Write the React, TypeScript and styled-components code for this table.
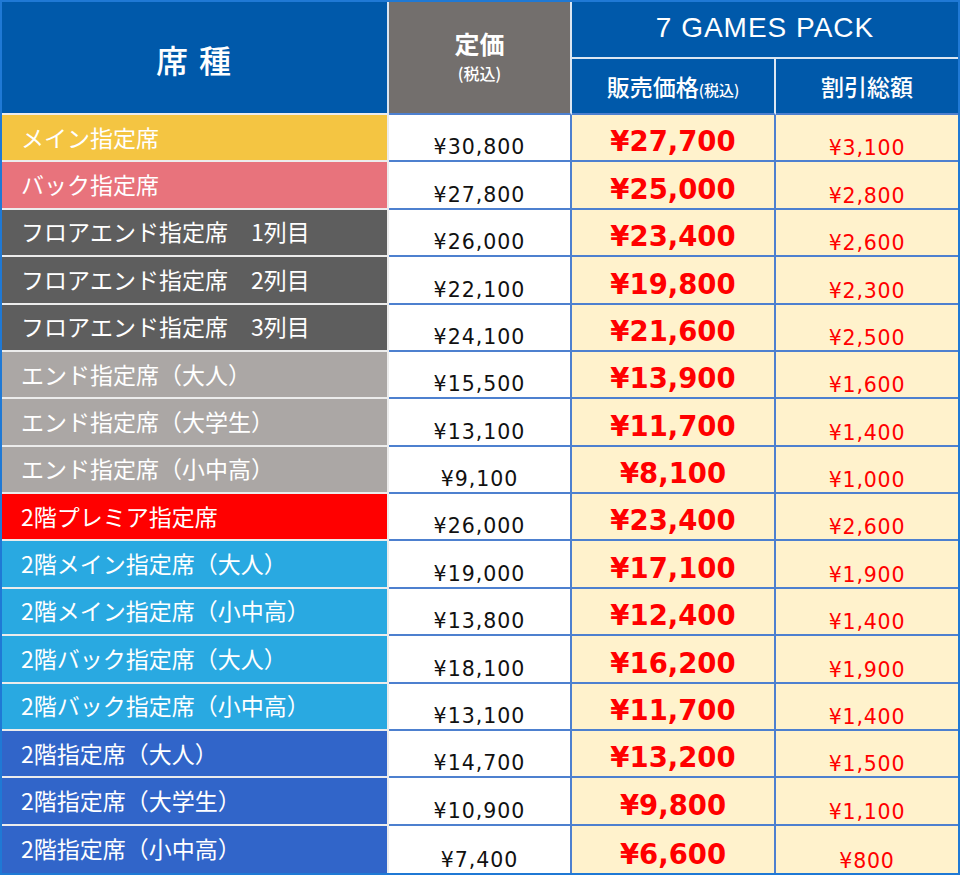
import React from "react";
import styled, { createGlobalStyle } from "styled-components";

const GlobalStyle = createGlobalStyle`
  html, body { margin: 0; padding: 0; background: #ffffff; }
  body { font-family: "Noto Sans CJK JP", "Noto Sans", sans-serif; }
`;

const LINE = "#4d80cf";
const HEAD_LINE = "#dbe6f2";
const LABEL_LINE = "#ececec";

const Table = styled.div`
  width: 960px;
  box-sizing: border-box;
  border: 2px solid #1f79d5;
  display: grid;
  grid-template-columns: 387px 183px 204px 182px;
  grid-template-rows: 57px 56px repeat(16, 47.375px);
  background: #ffffff;
`;

const HeadCell = styled.div<{ $bg?: string; $right?: boolean; $bottom?: string; $col?: string; $row?: string }>`
  box-sizing: border-box;
  background: ${(p) => p.$bg || "#0059aa"};
  color: #ffffff;
  display: flex;
  flex-direction: column;
  align-items: center;
  justify-content: center;
  grid-column: ${(p) => p.$col || "auto"};
  grid-row: ${(p) => p.$row || "auto"};
  border-right: ${(p) => (p.$right ? `2px solid ${HEAD_LINE}` : "none")};
  border-bottom: 2px solid ${(p) => p.$bottom || HEAD_LINE};
`;

const SeatTitle = styled.span`
  font-size: 32px;
  font-weight: 500;
  letter-spacing: 2px;
  line-height: 1;
  margin-top: 2px;
`;

const PriceTitle = styled.span`
  font-size: 25px;
  font-weight: 700;
  line-height: normal;
  margin-top: -6px;
`;

const TaxNote = styled.span`
  font-size: 16px;
  font-weight: 500;
  line-height: normal;
`;

const PackTitle = styled.span`
  font-family: "Liberation Sans", Arial, sans-serif;
  font-size: 28px;
  letter-spacing: 1px;
  line-height: 1;
  margin-top: -3px;
`;

const SubTitle = styled.span`
  font-size: 23px;
  font-weight: 500;
  line-height: 1;
  display: flex;
  align-items: baseline;
`;

const SmallTax = styled.span`
  font-size: 15px;
  font-weight: 500;
`;

const LabelCell = styled.div<{ $bg: string; $last: boolean }>`
  box-sizing: border-box;
  background: ${(p) => p.$bg};
  color: #ffffff;
  display: flex;
  align-items: center;
  padding: 0 0 1px 19px;
  font-size: 23px;
  font-weight: 400;
  line-height: 1;
  white-space: pre;
  border-right: 2px solid ${LABEL_LINE};
  border-bottom: ${(p) => (p.$last ? "none" : `2px solid ${LABEL_LINE}`)};
`;

const ValueCell = styled.div<{ $cream?: boolean; $right?: boolean; $last: boolean; $pb: number }>`
  box-sizing: border-box;
  background: ${(p) => (p.$cream ? "#fff2cc" : "#ffffff")};
  display: flex;
  align-items: flex-end;
  justify-content: center;
  padding-bottom: ${(p) => p.$pb}px;
  font-family: "DejaVu Sans", Verdana, sans-serif;
  border-right: ${(p) => (p.$right ? `2px solid ${LINE}` : "none")};
  border-bottom: ${(p) => (p.$last ? "none" : `2px solid ${LINE}`)};
`;

const ListPrice = styled.span`
  font-size: 20.5px;
  letter-spacing: 1px;
  line-height: 20px;
  color: #111111;
`;

const SalePrice = styled.span`
  font-size: 27.5px;
  font-weight: 700;
  line-height: 27px;
  color: #ff0000;
`;

const Discount = styled.span`
  font-size: 20.5px;
  letter-spacing: 0.8px;
  line-height: 20px;
  color: #ff0000;
`;

type Row = { label: string; bg: string; price: string; sale: string; off: string };

const YELLOW = "#f4c542";
const PINK = "#e8737c";
const DARK = "#5e5e5e";
const LIGHT = "#aba7a5";
const RED = "#ff0000";
const SKY = "#29a9e1";
const ROYAL = "#3165c9";

const rows: Row[] = [
  { label: "メイン指定席", bg: YELLOW, price: "¥30,800", sale: "¥27,700", off: "¥3,100" },
  { label: "バック指定席", bg: PINK, price: "¥27,800", sale: "¥25,000", off: "¥2,800" },
  { label: "フロアエンド指定席　1列目", bg: DARK, price: "¥26,000", sale: "¥23,400", off: "¥2,600" },
  { label: "フロアエンド指定席　2列目", bg: DARK, price: "¥22,100", sale: "¥19,800", off: "¥2,300" },
  { label: "フロアエンド指定席　3列目", bg: DARK, price: "¥24,100", sale: "¥21,600", off: "¥2,500" },
  { label: "エンド指定席（大人）", bg: LIGHT, price: "¥15,500", sale: "¥13,900", off: "¥1,600" },
  { label: "エンド指定席（大学生）", bg: LIGHT, price: "¥13,100", sale: "¥11,700", off: "¥1,400" },
  { label: "エンド指定席（小中高）", bg: LIGHT, price: "¥9,100", sale: "¥8,100", off: "¥1,000" },
  { label: "2階プレミア指定席", bg: RED, price: "¥26,000", sale: "¥23,400", off: "¥2,600" },
  { label: "2階メイン指定席（大人）", bg: SKY, price: "¥19,000", sale: "¥17,100", off: "¥1,900" },
  { label: "2階メイン指定席（小中高）", bg: SKY, price: "¥13,800", sale: "¥12,400", off: "¥1,400" },
  { label: "2階バック指定席（大人）", bg: SKY, price: "¥18,100", sale: "¥16,200", off: "¥1,900" },
  { label: "2階バック指定席（小中高）", bg: SKY, price: "¥13,100", sale: "¥11,700", off: "¥1,400" },
  { label: "2階指定席（大人）", bg: ROYAL, price: "¥14,700", sale: "¥13,200", off: "¥1,500" },
  { label: "2階指定席（大学生）", bg: ROYAL, price: "¥10,900", sale: "¥9,800", off: "¥1,100" },
  { label: "2階指定席（小中高）", bg: ROYAL, price: "¥7,400", sale: "¥6,600", off: "¥800" },
];

export default function App() {
  return (
    <>
      <GlobalStyle />
      <Table>
        <HeadCell $col="1" $row="1 / span 2" $right $bottom={LABEL_LINE}>
          <SeatTitle>席 種</SeatTitle>
        </HeadCell>
        <HeadCell $col="2" $row="1 / span 2" $bg="#736f6d" $right $bottom={LINE}>
          <PriceTitle>定価</PriceTitle>
          <TaxNote>(税込)</TaxNote>
        </HeadCell>
        <HeadCell $col="3 / span 2" $row="1">
          <PackTitle>7 GAMES PACK</PackTitle>
        </HeadCell>
        <HeadCell $col="3" $row="2" $right $bottom={LINE}>
          <SubTitle>
            販売価格<SmallTax>(税込)</SmallTax>
          </SubTitle>
        </HeadCell>
        <HeadCell $col="4" $row="2" $bottom={LINE}>
          <SubTitle>割引総額</SubTitle>
        </HeadCell>
        {rows.map((r, i) => {
          const last = i === rows.length - 1;
          return (
            <React.Fragment key={r.label}>
              <LabelCell $bg={r.bg} $last={last}>
                {r.label}
              </LabelCell>
              <ValueCell $right $last={last} $pb={3}>
                <ListPrice>{r.price}</ListPrice>
              </ValueCell>
              <ValueCell $cream $right $last={last} $pb={5}>
                <SalePrice>{r.sale}</SalePrice>
              </ValueCell>
              <ValueCell $cream $last={last} $pb={2}>
                <Discount>{r.off}</Discount>
              </ValueCell>
            </React.Fragment>
          );
        })}
      </Table>
    </>
  );
}
